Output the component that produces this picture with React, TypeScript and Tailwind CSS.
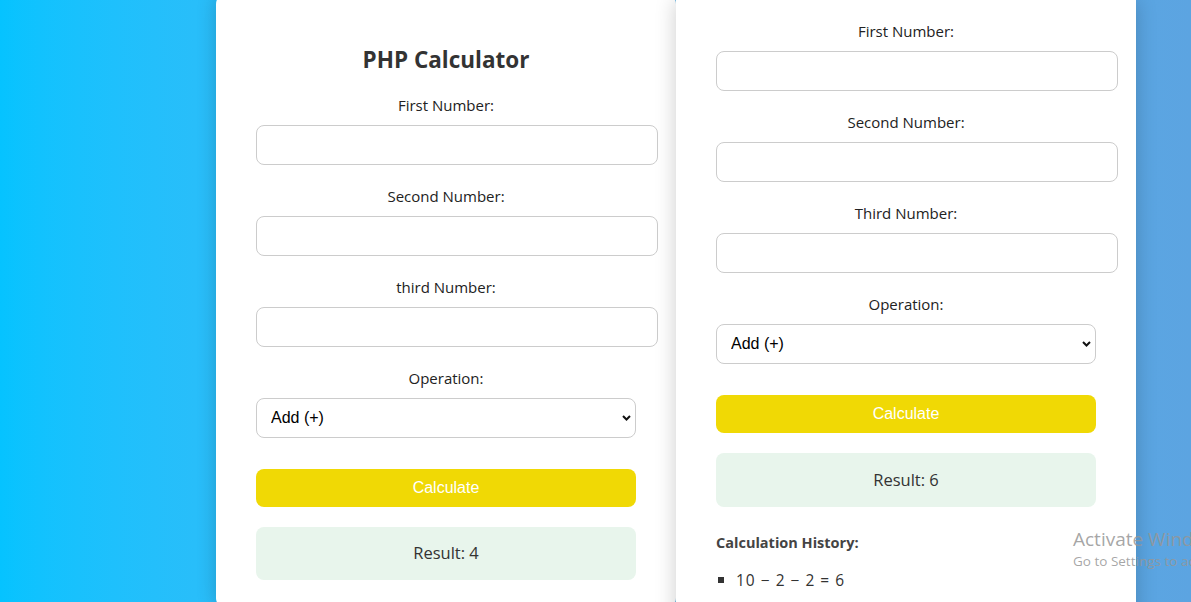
import React from "react";

function Field({ label }: { label: string }) {
  return (
    <>
      <label className="block text-center text-[15px] leading-5 mb-[10px] text-[#222]">
        {label}
      </label>
      <input
        type="text"
        className="block w-[402px] h-10 mb-[21px] border border-[#ccc] rounded-lg bg-white outline-none"
      />
    </>
  );
}

function Operation() {
  return (
    <>
      <label className="block text-center text-[15px] leading-5 mb-[10px] text-[#222]">
        Operation:
      </label>
      <div className="relative mb-[31px]">
        <select className="block w-full h-10 pl-[14px] appearance-none border border-[#ccc] rounded-lg bg-white text-base text-black font-['Liberation_Sans',Arial,sans-serif] outline-none">
          <option>Add (+)</option>
          <option>Subtract (-)</option>
          <option>Multiply (*)</option>
          <option>Divide (/)</option>
        </select>
        <svg
          className="absolute right-[5px] top-[17px] pointer-events-none"
          width="9"
          height="6"
          viewBox="0 0 9 6"
        >
          <polyline points="1,1 4.5,4.5 8,1" fill="none" stroke="#111" strokeWidth="2" />
        </svg>
      </div>
    </>
  );
}

function Calculate() {
  return (
    <button className="block w-full h-[38px] mb-5 rounded-lg bg-[#f0d905] text-white text-base font-['Liberation_Sans',Arial,sans-serif]">
      Calculate
    </button>
  );
}

function Result({ value, tall }: { value: number; tall?: boolean }) {
  return (
    <div
      className={
        tall
          ? "h-[54px] rounded-lg bg-[#e8f5ec] flex items-center justify-center text-[16.5px] text-[#333]"
          : "h-[53px] rounded-lg bg-[#e8f5ec] flex items-center justify-center text-[16.5px] text-[#333]"
      }
    >
      Result: {value}
    </div>
  );
}

export default function App() {
  return (
    <div className="relative h-[602px] w-full overflow-hidden bg-linear-to-r from-[#05c3ff] to-[#5ca4e1] font-['Open_Sans',sans-serif]">
      <div className="flex items-start pl-[216px]">
        {/* left card */}
        <div className="w-[460px] -mt-[6px] rounded-[10px] bg-white shadow-[0_0_20px_rgba(0,0,0,0.2)] px-10 pt-[51px] pb-[28px]">
          <h2 className="text-center text-[22.5px] leading-[30px] font-bold text-[#333] mb-5">
            PHP Calculator
          </h2>
          <Field label="First Number:" />
          <Field label="Second Number:" />
          <Field label="third Number:" />
          <Operation />
          <Calculate />
          <Result value={4} />
        </div>

        {/* right card */}
        <div className="w-[460px] bg-white shadow-[0_0_20px_rgba(0,0,0,0.2)] px-10 pt-[21px] pb-10">
          <Field label="First Number:" />
          <Field label="Second Number:" />
          <Field label="Third Number:" />
          <Operation />
          <Calculate />
          <Result value={6} tall />
          <h3 className="mt-[26px] text-[14.5px] leading-5 font-bold text-[#444]">
            Calculation History:
          </h3>
          <ul className="mt-[17px]">
            <li className="flex items-center text-[15.5px] leading-5 text-[#333]">
              <span className="ml-[2px] mr-3 h-[6px] w-[6px] bg-[#333]" />
              <span className="tracking-[1px]">10 − 2 − 2 = 6</span>
            </li>
          </ul>
        </div>
      </div>

      {/* windows watermark */}
      <div className="absolute left-[1073px] top-[527px] whitespace-nowrap text-[rgba(150,150,150,0.85)] font-['Open_Sans',sans-serif]">
        <div className="text-[19px] leading-6">Activate Windows</div>
        <div className="text-[13.5px] leading-5">Go to Settings to activate Windows.</div>
      </div>
    </div>
  );
}
